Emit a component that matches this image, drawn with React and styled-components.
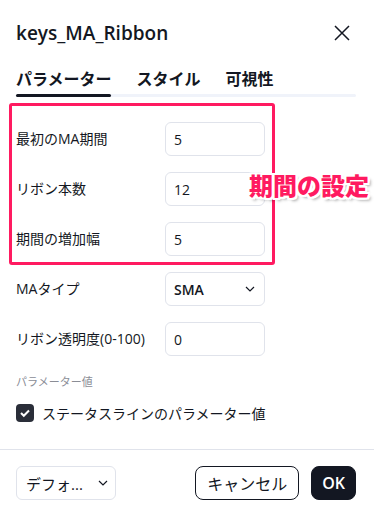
import React from "react";
import styled, { createGlobalStyle } from "styled-components";

const Global = createGlobalStyle`
  html, body { margin: 0; padding: 0; background: #fff; }
  body { font-family: "Open Sans", "Noto Sans CJK JP", sans-serif; color: #131722; }
  * { box-sizing: border-box; }
`;

const Dialog = styled.div`
  width: 374px;
  height: 513px;
  display: flex;
  flex-direction: column;
  background: #fff;
`;

const Header = styled.div`
  display: flex;
  align-items: center;
  justify-content: space-between;
  padding: 20px 24px 12px 16px;
  height: 58px;
`;

const Title = styled.div`
  font-size: 19px;
  font-weight: 600;
  line-height: 26px;
`;

const CloseButton = styled.button`
  border: 0;
  background: none;
  padding: 0;
  width: 16px;
  height: 16px;
  display: flex;
  cursor: pointer;
`;

const Tabs = styled.div`
  padding: 10px 18px 0 16px;
`;

const TabRow = styled.div`
  display: flex;
  gap: 25px;
`;

const Tab = styled.div`
  font-size: 16px;
  font-weight: 700;
  line-height: 22px;
  color: #131722;
`;

const Track = styled.div`
  margin-top: 4px;
  height: 3px;
  border-radius: 2px;
  background: #f0f3fa;
  display: flex;
`;

const Indicator = styled.div`
  width: 95px;
  height: 3px;
  border-radius: 2px;
  background: #131722;
`;

const Body = styled.div`
  padding: 6px 18px 0 16px;
  display: flex;
  flex-direction: column;
`;

const Highlight = styled.div`
  position: relative;
  align-self: flex-start;
  margin: 0 0 7px -7px;
  border: 3px solid #ff1a60;
  border-radius: 3px;
  padding: 16px 7px 6px 4px;
  display: flex;
  flex-direction: column;
  gap: 16px;
`;

const Note = styled.div`
  position: absolute;
  left: 237px;
  top: 64px;
  white-space: nowrap;
  font-family: "Noto Sans CJK JP", sans-serif;
  font-size: 24px;
  font-weight: 900;
  line-height: 30px;
  color: #ff1a60;
  text-shadow:
    -2px -2px 0 #fff, 2px -2px 0 #fff, -2px 2px 0 #fff, 2px 2px 0 #fff,
    0 -2px 0 #fff, 0 2px 0 #fff, -2px 0 0 #fff, 2px 0 0 #fff,
    3px 3px 3px rgba(0, 0, 0, 0.35);
`;

const Rows = styled.div`
  display: flex;
  flex-direction: column;
  gap: 16px;
`;

const Row = styled.div`
  display: grid;
  grid-template-columns: 149px 100px;
  align-items: center;
  height: 34px;
`;

const Label = styled.div`
  font-size: 14px;
  line-height: 20px;
  color: #131722;
  white-space: nowrap;
`;

const Field = styled.div`
  height: 34px;
  border: 1px solid #e0e3eb;
  border-radius: 6px;
  display: flex;
  align-items: center;
  justify-content: space-between;
  padding: 0 8px 0 8px;
  font-size: 14px;
  font-weight: ${(p) => (p.$bold ? 600 : 400)};
  color: #131722;
`;

const SectionLabel = styled.div`
  margin-top: 18px;
  font-size: 11px;
  line-height: 16px;
  color: #8a8d96;
`;

const CheckRow = styled.label`
  margin-top: 14px;
  display: flex;
  align-items: center;
  gap: 8px;
  height: 18px;
  font-size: 14px;
  color: #131722;
`;

const Box = styled.span`
  width: 18px;
  height: 18px;
  border-radius: 4px;
  background: #2a2e39;
  display: flex;
  align-items: center;
  justify-content: center;
`;

const Footer = styled.div`
  margin-top: auto;
  border-top: 1px solid #e0e3eb;
  padding: 16px 18px 13px 16px;
  display: flex;
  align-items: center;
`;

const DefaultSelect = styled.div`
  width: 100px;
  height: 34px;
  border: 1px solid #e0e3eb;
  border-radius: 6px;
  display: flex;
  align-items: center;
  justify-content: space-between;
  padding: 0 6px 0 9px;
  font-size: 15px;
  color: #131722;
`;

const Buttons = styled.div`
  margin-left: auto;
  display: flex;
  gap: 12px;
`;

const Button = styled.button`
  height: 34px;
  border-radius: 8px;
  font-family: inherit;
  font-size: 16px;
  padding: 0 ${(p) => (p.$primary ? "10px" : "11px")};
  border: 1px solid #131722;
  background: ${(p) => (p.$primary ? "#131722" : "#fff")};
  color: ${(p) => (p.$primary ? "#fff" : "#131722")};
  font-weight: ${(p) => (p.$primary ? 600 : 400)};
  min-width: ${(p) => (p.$primary ? "44px" : "104px")};
  cursor: pointer;
`;

const Chevron = () => (
  <svg width="12" height="8" viewBox="0 0 12 8">
    <path d="M2 2l4 4 4-4" fill="none" stroke="#131722" strokeWidth="1.2" />
  </svg>
);

const rowsTop = [
  ["最初のMA期間", "5"],
  ["リボン本数", "12"],
  ["期間の増加幅", "5"],
];

export default function App() {
  return (
    <>
      <Global />
      <Dialog>
        <Header>
          <Title>keys_MA_Ribbon</Title>
          <CloseButton aria-label="close">
            <svg width="16" height="16" viewBox="0 0 16 16">
              <path d="M1 1l14 14M15 1L1 15" stroke="#131722" strokeWidth="1.5" />
            </svg>
          </CloseButton>
        </Header>
        <Tabs>
          <TabRow>
            <Tab>パラメーター</Tab>
            <Tab>スタイル</Tab>
            <Tab>可視性</Tab>
          </TabRow>
          <Track>
            <Indicator />
          </Track>
        </Tabs>
        <Body>
          <Highlight>
            {rowsTop.map(([l, v]) => (
              <Row key={l}>
                <Label>{l}</Label>
                <Field>{v}</Field>
              </Row>
            ))}
            <Note>期間の設定</Note>
          </Highlight>
          <Rows>
            <Row>
              <Label>MAタイプ</Label>
              <Field $bold>
                SMA
                <Chevron />
              </Field>
            </Row>
            <Row>
              <Label>リボン透明度(0-100)</Label>
              <Field>0</Field>
            </Row>
          </Rows>
          <SectionLabel>パラメーター値</SectionLabel>
          <CheckRow>
            <Box>
              <svg width="12" height="10" viewBox="0 0 12 10">
                <path d="M2 5l2.8 2.8L10 2.5" fill="none" stroke="#fff" strokeWidth="2" />
              </svg>
            </Box>
            ステータスラインのパラメーター値
          </CheckRow>
        </Body>
        <Footer>
          <DefaultSelect>
            デフォ...
            <Chevron />
          </DefaultSelect>
          <Buttons>
            <Button>キャンセル</Button>
            <Button $primary>OK</Button>
          </Buttons>
        </Footer>
      </Dialog>
    </>
  );
}
